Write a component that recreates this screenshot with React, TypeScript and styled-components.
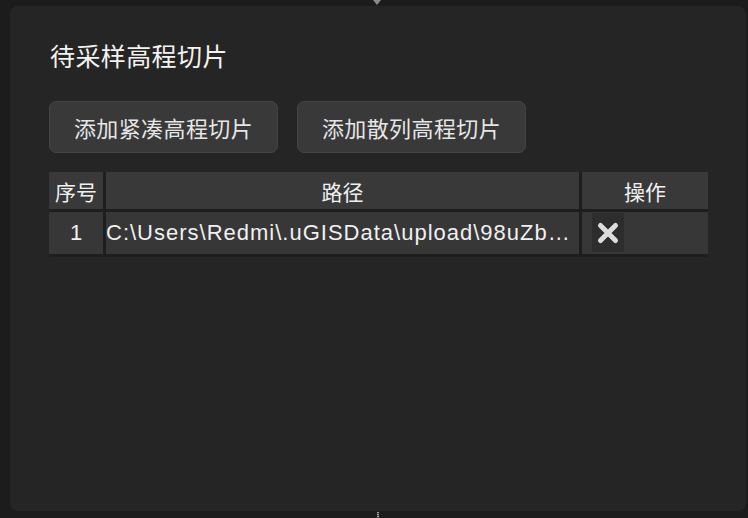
import React from "react";
import styled, { createGlobalStyle } from "styled-components";

const Global = createGlobalStyle`
  html, body { margin: 0; padding: 0; background: #1c1c1c; }
  body { width: 748px; height: 518px; overflow: hidden; font-family: "Noto Sans CJK SC", "Noto Sans", sans-serif; }
  #root { height: 100%; }
`;

const Stage = styled.div`
  position: relative;
  box-sizing: border-box;
  width: 748px;
  height: 518px;
  padding: 6px 2px 7px 10px;
  background: #1c1c1c;
`;

const Panel = styled.section`
  box-sizing: border-box;
  height: 100%;
  background: #252525;
  border-radius: 8px;
  padding: 32px 38px 0 39px;
  display: flex;
  flex-direction: column;
`;

const Title = styled.h2`
  margin: 0;
  font-size: 25px;
  letter-spacing: 0.4px;
  line-height: 34px;
  font-weight: 400;
  color: #f2f2f2;
  padding-left: 1px;
`;

const Toolbar = styled.div`
  display: flex;
  gap: 19px;
  margin-top: 29px;
`;

const Button = styled.button`
  box-sizing: border-box;
  width: 229px;
  height: 52px;
  border: 1px solid #444;
  border-radius: 7px;
  background: #393939;
  color: #e6e6e6;
  font-family: "Noto Sans CJK SC", sans-serif;
  font-size: 22px;
  letter-spacing: 0.4px;
  padding: 0;
  cursor: pointer;
`;

const Grid = styled.div`
  margin-top: 19px;
  width: 659px;
  display: grid;
  grid-template-columns: 54px 473px 126px;
  column-gap: 3px;
  row-gap: 3px;
  background: #1e1e1e;
  padding-bottom: 3px;
`;

const HeadCell = styled.div`
  height: 37px;
  background: #393939;
  color: #f0f0f0;
  font-size: 21px;
  display: flex;
  align-items: center;
  justify-content: center;
`;

const Cell = styled.div<{ $align?: "center" | "left" }>`
  height: 42px;
  background: #373737;
  color: #f0f0f0;
  font-family: "Liberation Sans", "Noto Sans CJK SC", sans-serif;
  font-size: 22px;
  letter-spacing: ${(p) => (p.$align === "left" ? "1px" : "0")};
  line-height: 42px;
  text-align: ${(p) => (p.$align === "left" ? "left" : "center")};
  white-space: nowrap;
  overflow: hidden;
  text-overflow: ellipsis;
  min-width: 0;
`;

const OpCell = styled.div`
  height: 42px;
  background: #373737;
  display: flex;
  align-items: stretch;
  padding: 1px 0 2px 10px;
  box-sizing: border-box;
`;

const DeleteButton = styled.button`
  width: 32px;
  border: 0;
  padding: 0;
  background: #2d2d2d;
  display: flex;
  align-items: center;
  justify-content: center;
  cursor: pointer;
`;

const TopMarker = styled.div`
  position: absolute;
  left: 373px;
  top: 0;
  width: 0;
  height: 0;
  border-left: 4px solid transparent;
  border-right: 4px solid transparent;
  border-top: 5px solid #8a8a8a;
`;

const BottomMarker = styled.div`
  position: absolute;
  left: 377px;
  top: 512px;
  width: 2px;
  height: 6px;
  background: repeating-linear-gradient(#9a9a9a 0 1px, #555 1px 2px);
`;

const rows = [
  { id: 1, path: "C:\\Users\\Redmi\\.uGISData\\upload\\98uZbWmK3xQ7mT2pLs.tif" },
];

export default function App() {
  return (
    <>
      <Global />
      <Stage>
        <TopMarker />
        <Panel>
          <Title>待采样高程切片</Title>
          <Toolbar>
            <Button>添加紧凑高程切片</Button>
            <Button>添加散列高程切片</Button>
          </Toolbar>
          <Grid>
            <HeadCell>序号</HeadCell>
            <HeadCell>路径</HeadCell>
            <HeadCell>操作</HeadCell>
            {rows.map((r) => (
              <React.Fragment key={r.id}>
                <Cell>{r.id}</Cell>
                <Cell $align="left" title={r.path}>{r.path}</Cell>
                <OpCell>
                  <DeleteButton aria-label="删除">
                    <svg width="24" height="24" viewBox="0 0 24 24">
                      <path
                        d="M4.5 4.5 L19.5 19.5 M19.5 4.5 L4.5 19.5"
                        stroke="#dcdcdc"
                        strokeWidth="5"
                        strokeLinecap="round"
                        fill="none"
                      />
                    </svg>
                  </DeleteButton>
                </OpCell>
              </React.Fragment>
            ))}
          </Grid>
        </Panel>
        <BottomMarker />
      </Stage>
    </>
  );
}
